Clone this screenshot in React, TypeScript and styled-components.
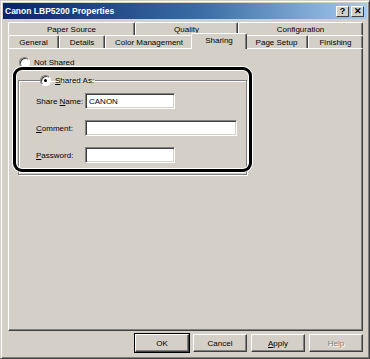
import React from "react";
import styled, { createGlobalStyle, css } from "styled-components";

const Global = createGlobalStyle`
  html, body { margin: 0; padding: 0; background: #d4d0c8; }
  body { font-family: "Liberation Sans", Arial, sans-serif; font-size: 8px; color: #000; }
`;

const Window = styled.div`
  width: 370px;
  height: 359px;
  box-sizing: border-box;
  background: #d4d0c8;
  border-top: 1px solid #d4d0c8;
  border-left: 1px solid #d4d0c8;
  border-right: 1px solid #404040;
  border-bottom: 1px solid #404040;
  box-shadow: inset 1px 1px 0 #fff, inset -1px -1px 0 #808080;
  padding: 2px;
  display: flex;
  flex-direction: column;
`;

const TitleBar = styled.div`
  height: 16px;
  background: linear-gradient(90deg, #0a246a 0%, #3a6ea5 55%, #a6caf0 100%);
  display: flex;
  align-items: center;
  justify-content: space-between;
  padding: 0 3px 0 2px;
`;

const Title = styled.span`
  color: #fff;
  font-weight: bold;
  font-size: 8.5px;
`;

const CaptionButtons = styled.div`
  display: flex;
  gap: 2px;
`;

const CaptionButton = styled.div`
  width: 13px;
  height: 11px;
  box-sizing: border-box;
  background: #d4d0c8;
  border-top: 1px solid #fff;
  border-left: 1px solid #fff;
  border-right: 1px solid #404040;
  border-bottom: 1px solid #404040;
  display: flex;
  align-items: center;
  justify-content: center;
  font-weight: bold;
  font-size: 9px;
  line-height: 1;
`;

const Body = styled.div`
  flex: 1;
  display: flex;
  flex-direction: column;
  padding: 3px 4px 0 5px;
`;

const TabRows = styled.div`
  display: flex;
  flex-direction: column;
  width: 355px;
`;

const TabRow = styled.div`
  display: flex;
  height: 13px;
  align-items: flex-end;
`;

const Tab = styled.div<{ $w: number; $active?: boolean }>`
  width: ${(p) => p.$w}px;
  height: 13px;
  box-sizing: border-box;
  border-top: 1px solid #fff;
  border-left: 1px solid #fff;
  border-right: 1px solid #404040;
  box-shadow: inset -1px 0 0 #808080;
  border-radius: 2px 2px 0 0;
  display: flex;
  align-items: center;
  justify-content: center;
  background: #d4d0c8;
  white-space: nowrap;
  ${(p) =>
    p.$active &&
    css`
      position: relative;
      z-index: 2;
      height: 16px;
      margin: 0 -2px -1px -2px;
      width: ${p.$w + 4}px;
      padding-bottom: 3px;
    `}
`;

const Panel = styled.div`
  position: relative;
  width: 355px;
  height: 283px;
  box-sizing: border-box;
  border-top: 1px solid #fff;
  border-left: 1px solid #fff;
  border-right: 1px solid #404040;
  border-bottom: 1px solid #404040;
  box-shadow: inset -1px -1px 0 #808080;
  padding: 8px 0 0 10px;
`;

const RadioRow = styled.label`
  display: flex;
  align-items: center;
  gap: 4px;
  height: 11px;
`;

const RadioCircle = styled.span<{ $checked?: boolean }>`
  width: 11px;
  height: 11px;
  box-sizing: border-box;
  border-radius: 50%;
  background: #fff;
  border: 1px solid;
  border-color: #808080 #fff #fff #808080;
  box-shadow: inset 1px 1px 0 #404040;
  display: flex;
  align-items: center;
  justify-content: center;
  &::after {
    content: "";
    width: 3px;
    height: 3px;
    border-radius: 50%;
    background: ${(p) => (p.$checked ? "#000" : "transparent")};
  }
`;

const U = styled.span`
  text-decoration: underline;
`;

const Group = styled.fieldset`
  margin: 7px 0 0 -1px;
  width: 229px;
  height: 100px;
  box-sizing: border-box;
  border: 1px solid #808080;
  box-shadow: 1px 1px 0 #fff, inset 1px 1px 0 #fff;
  padding: 7px 0 0 17px;
  display: flex;
  flex-direction: column;
  gap: 11px;
`;

const Legend = styled.legend`
  padding: 0 1px 0 0;
  margin-left: 4px;
`;

const FieldRow = styled.div`
  display: flex;
  align-items: center;
  height: 16px;
`;

const FieldLabel = styled.span`
  width: 49px;
`;

const TextBox = styled.div<{ $w: number }>`
  width: ${(p) => p.$w}px;
  height: 16px;
  box-sizing: border-box;
  background: #fff;
  border-top: 1px solid #808080;
  border-left: 1px solid #808080;
  border-right: 1px solid #fff;
  border-bottom: 1px solid #fff;
  box-shadow: inset 1px 1px 0 #404040, inset -1px -1px 0 #d4d0c8;
  padding: 0 3px;
  display: flex;
  align-items: center;
`;

const Highlight = styled.div`
  position: absolute;
  left: 4px;
  top: 18px;
  width: 239px;
  height: 105px;
  box-sizing: border-box;
  border: 3px solid #000;
  border-radius: 9px;
  box-shadow: 0 0 0 1px #fff, inset 0 0 0 1px #fff;
  pointer-events: none;
`;

const ButtonRow = styled.div`
  display: flex;
  justify-content: flex-end;
  gap: 4px;
  width: 355px;
  margin-top: 3px;
`;

const Button = styled.div<{ $default?: boolean; $disabled?: boolean }>`
  width: 54px;
  height: 18px;
  box-sizing: border-box;
  background: #d4d0c8;
  border-top: 1px solid #fff;
  border-left: 1px solid #fff;
  border-right: 1px solid #404040;
  border-bottom: 1px solid #404040;
  box-shadow: inset -1px -1px 0 #808080;
  display: flex;
  align-items: center;
  justify-content: center;
  ${(p) =>
    p.$default &&
    css`
      outline: 1px solid #000;
      outline-offset: 0;
    `}
  ${(p) =>
    p.$disabled &&
    css`
      color: #808080;
      text-shadow: 1px 1px 0 #fff;
    `}
`;

const topTabs = [
  { label: "Paper Source", w: 127 },
  { label: "Quality", w: 103 },
  { label: "Configuration", w: 125 },
];

const bottomTabs = [
  { label: "General", w: 51 },
  { label: "Details", w: 46 },
  { label: "Color Management", w: 88 },
  { label: "Sharing", w: 52, active: true },
  { label: "Page Setup", w: 63 },
  { label: "Finishing", w: 55 },
];

export default function App() {
  return (
    <>
      <Global />
      <Window>
        <TitleBar>
          <Title>Canon LBP5200 Properties</Title>
          <CaptionButtons>
            <CaptionButton>?</CaptionButton>
            <CaptionButton>✕</CaptionButton>
          </CaptionButtons>
        </TitleBar>
        <Body>
          <TabRows>
            <TabRow>
              {topTabs.map((t) => (
                <Tab key={t.label} $w={t.w}>
                  {t.label}
                </Tab>
              ))}
            </TabRow>
            <TabRow>
              {bottomTabs.map((t) => (
                <Tab key={t.label} $w={t.w} $active={t.active}>
                  {t.label}
                </Tab>
              ))}
            </TabRow>
          </TabRows>
          <Panel>
            <RadioRow>
              <RadioCircle />
              <span>
                <U>N</U>ot Shared
              </span>
            </RadioRow>
            <Group>
              <Legend>
                <RadioRow>
                  <RadioCircle $checked />
                  <span>
                    <U>S</U>hared As:
                  </span>
                </RadioRow>
              </Legend>
              <FieldRow>
                <FieldLabel>
                  Share <U>N</U>ame:
                </FieldLabel>
                <TextBox $w={90}>CANON</TextBox>
              </FieldRow>
              <FieldRow>
                <FieldLabel>
                  <U>C</U>omment:
                </FieldLabel>
                <TextBox $w={152} />
              </FieldRow>
              <FieldRow>
                <FieldLabel>
                  <U>P</U>assword:
                </FieldLabel>
                <TextBox $w={90} />
              </FieldRow>
            </Group>
            <Highlight />
          </Panel>
          <ButtonRow>
            <Button $default>OK</Button>
            <Button>Cancel</Button>
            <Button>
              <span>
                <U>A</U>pply
              </span>
            </Button>
            <Button $disabled>Help</Button>
          </ButtonRow>
        </Body>
      </Window>
    </>
  );
}
